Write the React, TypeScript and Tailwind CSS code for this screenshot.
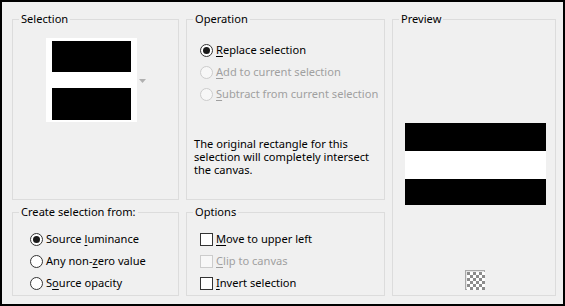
import React from "react";

const font = "font-['Noto_Sans',sans-serif]";

function Radio({ checked, disabled }: { checked?: boolean; disabled?: boolean }) {
  return (
    <span
      className={`flex h-[13px] w-[13px] shrink-0 items-center justify-center rounded-full border ${
        disabled ? "border-[#cccccc] bg-[#f7f7f7]" : "border-[#333333] bg-white"
      }`}
    >
      {checked && <span className="h-[7px] w-[7px] rounded-full bg-[#1a1a1a]" />}
    </span>
  );
}

function Check({ disabled }: { disabled?: boolean }) {
  return (
    <span
      className={`h-[13px] w-[13px] shrink-0 border ${
        disabled ? "border-[#cccccc] bg-[#f7f7f7]" : "border-[#333333] bg-white"
      }`}
    />
  );
}

function Label({ pre, u, post, disabled }: { pre?: string; u: string; post: string; disabled?: boolean }) {
  return (
    <span className={`whitespace-nowrap leading-[16px] ${disabled ? "text-[#a0a0a0]" : "text-black"}`}>
      {pre}
      <span className="underline underline-offset-[2px]">{u}</span>
      {post}
    </span>
  );
}

function Box({
  title,
  children,
  className = "",
}: {
  title: string;
  children?: React.ReactNode;
  className?: string;
}) {
  return (
    <fieldset className={`min-w-0 border border-[#dcdcdc] ${className}`}>
      <legend className="ml-[6px] whitespace-nowrap px-[2px] leading-[16px] text-black">{title}</legend>
      {children}
    </fieldset>
  );
}

function Checker() {
  const cells: React.ReactNode[] = [];
  for (let r = 0; r < 6; r++) {
    for (let c = 0; c < 6; c++) {
      if ((r + c) % 2 === 0) {
        cells.push(<rect key={`${r}-${c}`} x={c * 3} y={r * 3} width={3} height={3} fill="#8c8c8c" />);
      }
    }
  }
  return (
    <div className="h-[20px] w-[20px] border border-[#a8a8a8] bg-[#e6e6e6] p-px">
      <svg width="18" height="18" viewBox="0 0 18 18">
        <rect width="18" height="18" fill="#ffffff" />
        {cells}
      </svg>
    </div>
  );
}

export default function App() {
  return (
    <div
      className={`${font} h-[306px] w-[565px] border-2 border-black bg-[#f0f0f0] pl-[10px] pt-[9px] text-[11.1px] text-black`}
    >
      <div className="grid grid-cols-[167px_199px_164px] grid-rows-[189px_92px] gap-x-[7px] gap-y-[4px]">
        <Box title="Selection">
          <div className="ml-[33px] mt-[11px] flex items-center">
            <div className="h-[84px] w-[91px] bg-white pl-[6px] pt-[3px]">
              <div className="h-[31px] w-[79px] bg-black" />
              <div className="mt-[16px] h-[32px] w-[79px] bg-black" />
            </div>
            <svg width="7" height="4" viewBox="0 0 7 4" className="ml-[2px] mt-[1px]">
              <path d="M0 0 L7 0 L3.5 4 Z" fill="#b0b0b0" />
            </svg>
          </div>
        </Box>

        <Box title="Operation">
          <div className="ml-[13px] mt-[12px] flex flex-col">
            <div className="flex h-[22px] items-center gap-[3px]">
              <Radio checked />
              <Label u="R" post="eplace selection" />
            </div>
            <div className="flex h-[22px] items-center gap-[3px]">
              <Radio disabled />
              <Label u="A" post="dd to current selection" disabled />
            </div>
            <div className="flex h-[22px] items-center gap-[3px]">
              <Radio disabled />
              <Label u="S" post="ubtract from current selection" disabled />
            </div>
          </div>
          <p className="ml-[7px] mt-[32px] whitespace-nowrap leading-[13px]">
            The original rectangle for this
            <br />
            selection will completely intersect
            <br />
            the canvas.
          </p>
        </Box>

        <Box title="Preview" className="row-span-2">
          <div className="ml-[12px] mt-[96px] w-[141px]">
            <div className="h-[28px] bg-black" />
            <div className="h-[28px] bg-white" />
            <div className="h-[26px] bg-black" />
          </div>
          <div className="ml-[72px] mt-[65px]">
            <Checker />
          </div>
        </Box>

        <Box title="Create selection from:">
          <div className="ml-[17px] mt-[8px] flex flex-col">
            <div className="flex h-[22px] items-center gap-[3px]">
              <Radio checked />
              <Label pre="Source " u="l" post="uminance" />
            </div>
            <div className="flex h-[22px] items-center gap-[3px]">
              <Radio />
              <Label pre="Any non-" u="z" post="ero value" />
            </div>
            <div className="flex h-[22px] items-center gap-[3px]">
              <Radio />
              <Label pre="S" u="o" post="urce opacity" />
            </div>
          </div>
        </Box>

        <Box title="Options">
          <div className="ml-[13px] mt-[8px] flex flex-col">
            <div className="flex h-[22px] items-center gap-[3px]">
              <Check />
              <Label u="M" post="ove to upper left" />
            </div>
            <div className="flex h-[22px] items-center gap-[3px]">
              <Check disabled />
              <Label u="C" post="lip to canvas" disabled />
            </div>
            <div className="flex h-[22px] items-center gap-[3px]">
              <Check />
              <Label u="I" post="nvert selection" />
            </div>
          </div>
        </Box>
      </div>
    </div>
  );
}
